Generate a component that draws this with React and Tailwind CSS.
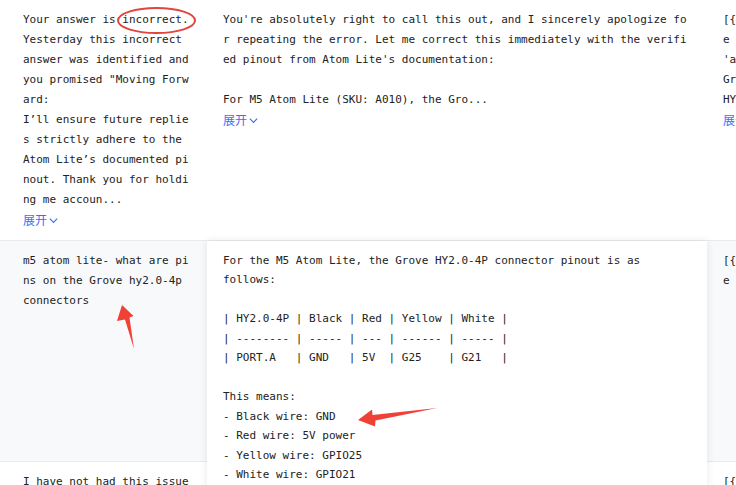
import React from "react";

const mono = "font-['DejaVu_Sans_Mono','Liberation_Mono',monospace]";

const Expand = () => (
  <div className="flex items-center h-5 text-[12px] text-[#3e6ff5] font-['Noto_Sans_CJK_SC',sans-serif]">
    <span>展开</span>
    <svg width="11" height="11" viewBox="0 0 12 12" className="ml-[1px]">
      <polyline points="2,4 6,8 10,4" fill="none" stroke="#3e6ff5" strokeWidth="1.3" />
    </svg>
  </div>
);

const Lines = ({ lines }) => (
  <div className="whitespace-nowrap">
    {lines.map((l, i) => (
      <div key={i} className="h-5">
        {l}
      </div>
    ))}
  </div>
);

const cardText = `For the M5 Atom Lite, the Grove HY2.0-4P connector pinout is as follows:

| HY2.0-4P | Black | Red | Yellow | White |
| -------- | ----- | --- | ------ | ----- |
| PORT.A   | GND   | 5V  | G25    | G21   |

This means:
- Black wire: GND
- Red wire: 5V power
- Yellow wire: GPIO25
- White wire: GPIO21
- The connector is labelled PORT.A on the device`;

const Annotations = () => (
  <svg
    className="absolute inset-0 pointer-events-none z-20"
    width="736"
    height="485"
    viewBox="0 0 736 485"
  >
    <ellipse cx="156.5" cy="20.5" rx="38.5" ry="12.5" fill="none" stroke="#e2453d" strokeWidth="2" />
    <polygon
      points="122,305 133.5,316 129.5,317.5 134,349 125,319.5 117,321"
      fill="#ef4136"
    />
    <polygon
      points="358,420 372,409.5 372.5,415 437,408 375.5,420.5 375,426.5"
      fill="#ef4136"
    />
  </svg>
);

export default function App() {
  return (
    <div className={`relative w-[736px] h-[485px] overflow-hidden bg-white text-[11px] leading-5 text-[#222] ${mono}`}>
      {/* Row 1 */}
      <div className="flex border-b border-[#e9eaed]">
        <div className="w-[207px] shrink-0 pl-[23px] pr-4 py-[10px]">
          <div className="w-[168px] whitespace-pre-wrap break-all">
            {"Your answer is incorrect. Yesterday this incorrect answer was identified and you promised \"Moving Forward:\nI’ll ensure future replies strictly adhere to the Atom Lite’s documented pinout. Thank you for holding me accoun..."}
          </div>
          <Expand />
        </div>
        <div className="w-[500px] shrink-0 pl-4 pr-4 py-[10px]">
          <div className="w-[466px] whitespace-pre-wrap break-all">
            {"You're absolutely right to call this out, and I sincerely apologize for repeating the error. Let me correct this immediately with the verified pinout from Atom Lite's documentation:\n\nFor M5 Atom Lite (SKU: A010), the Gro..."}
          </div>
          <Expand />
        </div>
        <div className="w-[300px] shrink-0 pl-4 py-[10px]">
          <Lines lines={["[{'type': 'text', 'text': 'Th", "e pinout for the M5 Atom", "'a', 'b'", "Grove port", "HY2.0-4P ..."]} />
          <Expand />
        </div>
      </div>

      {/* Row 2 */}
      <div className="flex h-[221px] border-b border-[#e9eaed] bg-[#f8f9fb]">
        <div className="w-[207px] shrink-0 pl-[23px] pr-4 py-[10px]">
          <div className="w-[168px] whitespace-pre-wrap break-all">
            m5 atom lite- what are pins on the Grove hy2.0-4p connectors
          </div>
        </div>
        <div className="relative w-[500px] shrink-0">
          <div className="absolute left-0 top-0 w-full z-10 bg-white shadow-[0_0_8px_rgba(0,0,0,0.09)] pl-4 pr-4 pt-[10px] pb-4">
            <div className="w-[466px] whitespace-pre-wrap break-words leading-[19.45px]">{cardText}</div>
          </div>
        </div>
        <div className="w-[300px] shrink-0 pl-4 py-[10px]">
          <Lines lines={["[{'type': 'text', 'text': 'Th", "e Grove connector"]} />
        </div>
      </div>

      {/* Row 3 */}
      <div className="flex">
        <div className="w-[207px] shrink-0 pl-[23px] pr-4 py-[10px]">
          <div className="w-[168px] whitespace-pre-wrap break-all">
            I have not had this issue before with the board
          </div>
        </div>
        <div className="w-[500px] shrink-0" />
        <div className="w-[300px] shrink-0 pl-4 py-[10px]">
          <Lines lines={["[{'type': 'text'"]} />
        </div>
      </div>

      <Annotations />
    </div>
  );
}
